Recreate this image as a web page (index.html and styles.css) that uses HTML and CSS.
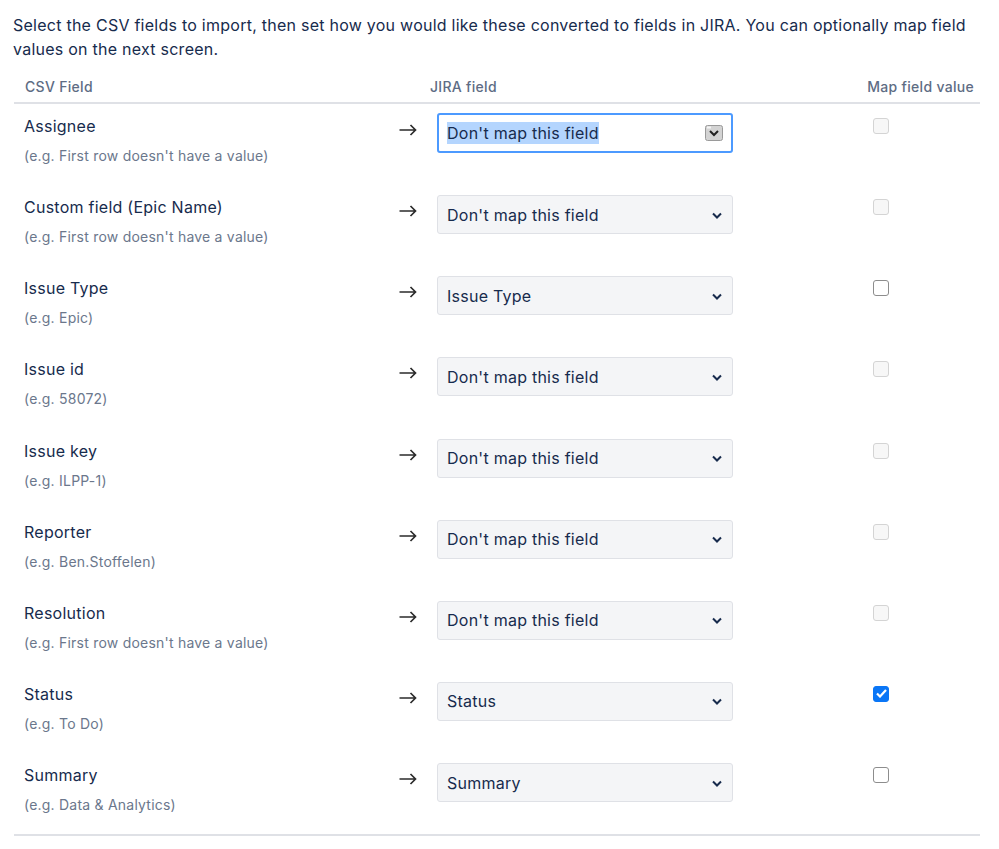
FILE: index.html
```html
<!DOCTYPE html>
<html>
<head>
<meta charset="utf-8">
<link rel="stylesheet" href="styles.css">
</head>
<body>
<div class="page">
  <p class="intro">Select the CSV fields to import, then set how you would like these converted to fields in JIRA. You can optionally map field values on the next screen.</p>
  <div class="table">
    <div class="head">
      <div class="h-csv">CSV Field</div>
      <div></div>
      <div class="h-jira">JIRA field</div>
      <div class="h-map">Map field value</div>
    </div>

    <div class="row">
      <div class="csv"><div class="name">Assignee</div><div class="ex">(e.g. First row doesn't have a value)</div></div>
      <div class="arrow"><svg width="18" height="12" viewBox="0 0 18 12"><path d="M0.5 6H16.5M11.5 1L16.5 6L11.5 11" fill="none" stroke="#2b2b2b" stroke-width="1.7"/></svg></div>
      <div class="jira"><div class="select focused"><span class="sel-text">Don't map this field</span><svg class="focus-icon" width="18" height="16" viewBox="0 0 18 16"><rect x="0.5" y="0.5" width="17" height="15" rx="2" fill="#d3d3d3" stroke="#9a9a9a"/><path d="M2 2.5H6" stroke="#f4f4f4" stroke-width="2"/><path d="M5 6L9 10L13 6" fill="none" stroke="#222" stroke-width="2"/></svg></div></div>
      <div class="map"><span class="cb disabled"></span></div>
    </div>

    <div class="row">
      <div class="csv"><div class="name">Custom field (Epic Name)</div><div class="ex">(e.g. First row doesn't have a value)</div></div>
      <div class="arrow"><svg width="18" height="12" viewBox="0 0 18 12"><path d="M0.5 6H16.5M11.5 1L16.5 6L11.5 11" fill="none" stroke="#2b2b2b" stroke-width="1.7"/></svg></div>
      <div class="jira"><div class="select"><span>Don't map this field</span><svg class="chev" width="10" height="7" viewBox="0 0 10 7"><path d="M1 1.5L5 5.5L9 1.5" fill="none" stroke="#172b4d" stroke-width="2"/></svg></div></div>
      <div class="map"><span class="cb disabled"></span></div>
    </div>

    <div class="row">
      <div class="csv"><div class="name">Issue Type</div><div class="ex">(e.g. Epic)</div></div>
      <div class="arrow"><svg width="18" height="12" viewBox="0 0 18 12"><path d="M0.5 6H16.5M11.5 1L16.5 6L11.5 11" fill="none" stroke="#2b2b2b" stroke-width="1.7"/></svg></div>
      <div class="jira"><div class="select"><span>Issue Type</span><svg class="chev" width="10" height="7" viewBox="0 0 10 7"><path d="M1 1.5L5 5.5L9 1.5" fill="none" stroke="#172b4d" stroke-width="2"/></svg></div></div>
      <div class="map"><span class="cb"></span></div>
    </div>

    <div class="row">
      <div class="csv"><div class="name">Issue id</div><div class="ex">(e.g. 58072)</div></div>
      <div class="arrow"><svg width="18" height="12" viewBox="0 0 18 12"><path d="M0.5 6H16.5M11.5 1L16.5 6L11.5 11" fill="none" stroke="#2b2b2b" stroke-width="1.7"/></svg></div>
      <div class="jira"><div class="select"><span>Don't map this field</span><svg class="chev" width="10" height="7" viewBox="0 0 10 7"><path d="M1 1.5L5 5.5L9 1.5" fill="none" stroke="#172b4d" stroke-width="2"/></svg></div></div>
      <div class="map"><span class="cb disabled"></span></div>
    </div>

    <div class="row">
      <div class="csv"><div class="name">Issue key</div><div class="ex">(e.g. ILPP-1)</div></div>
      <div class="arrow"><svg width="18" height="12" viewBox="0 0 18 12"><path d="M0.5 6H16.5M11.5 1L16.5 6L11.5 11" fill="none" stroke="#2b2b2b" stroke-width="1.7"/></svg></div>
      <div class="jira"><div class="select"><span>Don't map this field</span><svg class="chev" width="10" height="7" viewBox="0 0 10 7"><path d="M1 1.5L5 5.5L9 1.5" fill="none" stroke="#172b4d" stroke-width="2"/></svg></div></div>
      <div class="map"><span class="cb disabled"></span></div>
    </div>

    <div class="row">
      <div class="csv"><div class="name">Reporter</div><div class="ex">(e.g. Ben.Stoffelen)</div></div>
      <div class="arrow"><svg width="18" height="12" viewBox="0 0 18 12"><path d="M0.5 6H16.5M11.5 1L16.5 6L11.5 11" fill="none" stroke="#2b2b2b" stroke-width="1.7"/></svg></div>
      <div class="jira"><div class="select"><span>Don't map this field</span><svg class="chev" width="10" height="7" viewBox="0 0 10 7"><path d="M1 1.5L5 5.5L9 1.5" fill="none" stroke="#172b4d" stroke-width="2"/></svg></div></div>
      <div class="map"><span class="cb disabled"></span></div>
    </div>

    <div class="row">
      <div class="csv"><div class="name">Resolution</div><div class="ex">(e.g. First row doesn't have a value)</div></div>
      <div class="arrow"><svg width="18" height="12" viewBox="0 0 18 12"><path d="M0.5 6H16.5M11.5 1L16.5 6L11.5 11" fill="none" stroke="#2b2b2b" stroke-width="1.7"/></svg></div>
      <div class="jira"><div class="select"><span>Don't map this field</span><svg class="chev" width="10" height="7" viewBox="0 0 10 7"><path d="M1 1.5L5 5.5L9 1.5" fill="none" stroke="#172b4d" stroke-width="2"/></svg></div></div>
      <div class="map"><span class="cb disabled"></span></div>
    </div>

    <div class="row">
      <div class="csv"><div class="name">Status</div><div class="ex">(e.g. To Do)</div></div>
      <div class="arrow"><svg width="18" height="12" viewBox="0 0 18 12"><path d="M0.5 6H16.5M11.5 1L16.5 6L11.5 11" fill="none" stroke="#2b2b2b" stroke-width="1.7"/></svg></div>
      <div class="jira"><div class="select"><span>Status</span><svg class="chev" width="10" height="7" viewBox="0 0 10 7"><path d="M1 1.5L5 5.5L9 1.5" fill="none" stroke="#172b4d" stroke-width="2"/></svg></div></div>
      <div class="map"><span class="cb checked"><svg width="11" height="9" viewBox="0 0 11 9"><path d="M1 4.5L4 7.5L10 1" fill="none" stroke="#fff" stroke-width="2.2"/></svg></span></div>
    </div>

    <div class="row">
      <div class="csv"><div class="name">Summary</div><div class="ex">(e.g. Data &amp; Analytics)</div></div>
      <div class="arrow"><svg width="18" height="12" viewBox="0 0 18 12"><path d="M0.5 6H16.5M11.5 1L16.5 6L11.5 11" fill="none" stroke="#2b2b2b" stroke-width="1.7"/></svg></div>
      <div class="jira"><div class="select"><span>Summary</span><svg class="chev" width="10" height="7" viewBox="0 0 10 7"><path d="M1 1.5L5 5.5L9 1.5" fill="none" stroke="#172b4d" stroke-width="2"/></svg></div></div>
      <div class="map"><span class="cb"></span></div>
    </div>
  </div>
</div>
</body>
</html>
```

FILE: styles.css
```css
html, body {
  margin: 0;
  padding: 0;
  background: #fff;
}
body {
  font-family: Inter, "Liberation Sans", sans-serif;
  color: #172b4d;
}
.page {
  padding: 13px 0 0 13px;
  width: 967px;
}
.intro {
  margin: 0;
  font-size: 16px;
  line-height: 24px;
  letter-spacing: 0.25px;
  color: #172b4d;
}
.table {
  margin-top: 16px;
  margin-left: 1px;
  width: 966px;
  border-bottom: 2px solid #dfe1e6;
}
.head, .row {
  display: grid;
  grid-template-columns: 376px 40px 428px 122px;
}
.head {
  font-size: 14px;
  line-height: 20px;
  font-weight: 500;
  letter-spacing: 0.3px;
  color: #5e6c84;
  padding-bottom: 5px;
  border-bottom: 2px solid #dfe1e6;
}
.h-csv { padding-left: 11px; }
.h-map { text-align: right; padding-right: 6px; }
.row {
  height: 81.15px;
  box-sizing: border-box;
  padding-top: 10px;
  align-items: start;
}
.csv { padding-left: 10px; }
.name {
  font-size: 16px;
  line-height: 24px;
  letter-spacing: 0.25px;
  color: #172b4d;
}
.ex {
  margin-top: 8px;
  font-size: 14px;
  line-height: 20px;
  letter-spacing: 0.22px;
  color: #6b778c;
}
.arrow {
  padding: 10px 0 0 9px;
  line-height: 0;
}
.jira { padding-left: 7px; }
.select {
  width: 296px;
  height: 39px;
  box-sizing: border-box;
  border: 1px solid #dfe1e6;
  background: #f4f5f7;
  border-radius: 3px;
  display: flex;
  align-items: center;
  justify-content: space-between;
  padding: 0 10px 0 9px;
  font-size: 16px;
  letter-spacing: 0.25px;
  color: #172b4d;
}
.select.focused {
  height: 40px;
  margin-top: -1px;
  border: 2px solid #4c9aff;
  background: #fff;
  padding: 0 8px 0 8px;
}
.sel-text {
  background: #b4d5fe;
  line-height: 22px;
}
.chev { display: block; margin-top: 1px; }
.focus-icon { display: block; }
.map { padding: 4px 0 0 15px; line-height: 0; }
.cb {
  display: inline-flex;
  align-items: center;
  justify-content: center;
  width: 16px;
  height: 16px;
  box-sizing: border-box;
  border: 1px solid #8d8d8d;
  border-radius: 3px;
  background: #fff;
}
.cb.disabled {
  border-color: #d4d4d4;
  background: #f7f7f7;
}
.cb.checked {
  border-color: #0a76f6;
  background: #0a76f6;
}
```
